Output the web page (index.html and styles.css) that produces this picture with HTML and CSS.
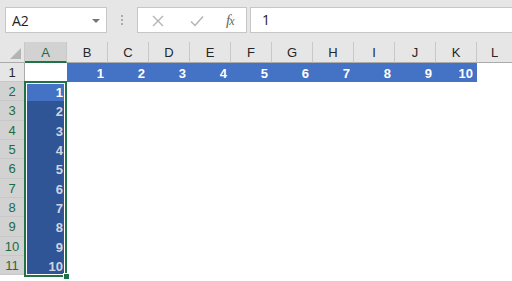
FILE: index.html
```html
<!DOCTYPE html>
<html>
<head>
<meta charset="utf-8">
<link rel="stylesheet" href="styles.css">
</head>
<body>
<div class="toolbar">
  <div class="namebox"><span class="nb-text">A2</span><span class="nb-arrow"></span></div>
  <div class="dots"><i></i><i></i><i></i></div>
  <div class="fbuttons">
    <svg class="ic-x" width="12" height="12" viewBox="0 0 12 12"><path d="M1 1L11 11M11 1L1 11" stroke="#b4b4b4" stroke-width="1.4" fill="none"/></svg>
    <svg class="ic-check" width="14" height="12" viewBox="0 0 14 12"><path d="M1 6.5L5 10.5L13 1.5" stroke="#b4b4b4" stroke-width="1.5" fill="none"/></svg>
    <span class="fx">f<span class="fx-x">x</span></span>
  </div>
  <div class="finput">1</div>
</div>
<div class="sheet">
  <div class="corner"><span class="tri"></span></div>
  <div class="ch sel">A</div><div class="ch">B</div><div class="ch">C</div><div class="ch">D</div><div class="ch">E</div><div class="ch">F</div><div class="ch">G</div><div class="ch">H</div><div class="ch">I</div><div class="ch">J</div><div class="ch">K</div><div class="ch last">L</div>

  <div class="rh">1</div><div class="c"></div><div class="c b">1</div><div class="c b">2</div><div class="c b">3</div><div class="c b">4</div><div class="c b">5</div><div class="c b">6</div><div class="c b">7</div><div class="c b">8</div><div class="c b">9</div><div class="c b">10</div><div class="c"></div>

  <div class="rh sel">2</div><div class="c act">1</div><div class="c fill"></div>
  <div class="rh sel">3</div><div class="c s">2</div><div class="c fill"></div>
  <div class="rh sel">4</div><div class="c s">3</div><div class="c fill"></div>
  <div class="rh sel">5</div><div class="c s">4</div><div class="c fill"></div>
  <div class="rh sel">6</div><div class="c s">5</div><div class="c fill"></div>
  <div class="rh sel">7</div><div class="c s">6</div><div class="c fill"></div>
  <div class="rh sel">8</div><div class="c s">7</div><div class="c fill"></div>
  <div class="rh sel">9</div><div class="c s">8</div><div class="c fill"></div>
  <div class="rh sel">10</div><div class="c s">9</div><div class="c fill"></div>
  <div class="rh sel">11</div><div class="c s">10</div><div class="c fill"></div>

  <div class="selection"><span class="handle"></span></div>
</div>
</body>
</html>
```
FILE: styles.css
```css
html, body {
  margin: 0;
  padding: 0;
  background: #ffffff;
  overflow: hidden;
}
body {
  font-family: "Liberation Sans", Arial, sans-serif;
  width: 512px;
  height: 281px;
}
.toolbar {
  height: 42px;
  background: #e6e6e6;
  display: flex;
  align-items: flex-start;
  padding: 7px 0 0 5px;
  box-sizing: border-box;
}
.namebox {
  width: 102px;
  height: 26px;
  box-sizing: border-box;
  background: #fff;
  border: 1px solid #c6c6c6;
  display: flex;
  align-items: center;
  justify-content: space-between;
  padding: 0 6px 0 6px;
}
.nb-text {
  font-family: "Open Sans", "Noto Sans", sans-serif;
  font-size: 14px;
  color: #222;
}
.nb-arrow {
  width: 0;
  height: 0;
  border-left: 4px solid transparent;
  border-right: 4px solid transparent;
  border-top: 4px solid #777;
  margin-top: 1px;
}
.dots {
  width: 30px;
  height: 26px;
  display: flex;
  flex-direction: column;
  align-items: center;
  justify-content: center;
  gap: 2px;
}
.dots i {
  display: block;
  width: 2px;
  height: 2px;
  background: #acacac;
}
.fbuttons {
  width: 110px;
  height: 26px;
  box-sizing: border-box;
  background: #fff;
  border: 1px solid #c6c6c6;
  display: flex;
  align-items: center;
  padding-left: 14px;
}
.ic-x { margin-top: 1px; }
.ic-check { margin-left: 26px; margin-top: 1px; }
.fx {
  margin-left: 22px;
  font-family: "Liberation Serif", "DejaVu Serif", serif;
  font-style: italic;
  font-size: 15px;
  color: #666;
  letter-spacing: -1px;
}
.fx-x { font-size: 12px; }
.finput {
  margin-left: 3px;
  flex: 1;
  height: 26px;
  box-sizing: border-box;
  background: #fff;
  border: 1px solid #c6c6c6;
  border-right: none;
  padding-left: 11px;
  font-family: "Open Sans", "Noto Sans", sans-serif;
  font-size: 14px;
  line-height: 24px;
  color: #222;
}
.sheet {
  position: relative;
  display: grid;
  grid-template-columns: 25px 42px repeat(10, 41px) 1fr;
  grid-template-rows: 21px 19px 19px 20px 19px 19px 20px 19px 19px 20px 19px 19px;
}
.corner {
  background: #e6e6e6;
  border-right: 1px solid #c8c8c8;
  border-bottom: 1px solid #ababab;
  position: relative;
}
.tri {
  position: absolute;
  right: 3px;
  bottom: 3px;
  width: 0;
  height: 0;
  border-left: 11px solid transparent;
  border-bottom: 11px solid #b4b4b4;
}
.ch {
  background: #e6e6e6;
  border-right: 1px solid #c8c8c8;
  border-bottom: 1px solid #ababab;
  font-family: "Liberation Sans", Arial, sans-serif;
  font-size: 13px;
  color: #262626;
  display: flex;
  align-items: center;
  justify-content: center;
  padding-top: 1px;
}
.ch.last { border-right: none; }
.ch.sel {
  background: #d2d2d2;
  color: #1e6b41;
  border-bottom: 2px solid #217346;
}
.rh {
  background: #e6e6e6;
  border-right: 1px solid #ababab;
  border-bottom: 1px solid #c8c8c8;
  font-size: 13px;
  color: #262626;
  display: flex;
  align-items: center;
  justify-content: center;
}
.rh.sel {
  background: #d2d2d2;
  color: #1e6b41;
}
.c {
  font-family: "Liberation Sans", Arial, sans-serif;
  font-size: 13px;
  font-weight: bold;
  display: flex;
  align-items: center;
  justify-content: flex-end;
  padding-right: 4px;
  padding-top: 1px;
}
.c.b {
  background: #4472c4;
  color: #fff;
}
.c.act {
  background: #4472c4;
  color: #fff;
}
.c.s {
  background: #2f5597;
  color: #cfd5e2;
}
.fill {
  grid-column: 3 / 14;
}
.selection {
  position: absolute;
  left: 24px;
  top: 39px;
  width: 43px;
  height: 196px;
  box-sizing: border-box;
  border: 2px solid #217346;
  box-shadow: inset 0 0 0 1px #fff;
}
.handle {
  position: absolute;
  right: -5px;
  bottom: -5px;
  width: 5px;
  height: 5px;
  background: #217346;
  border: 1px solid #fff;
}
```
